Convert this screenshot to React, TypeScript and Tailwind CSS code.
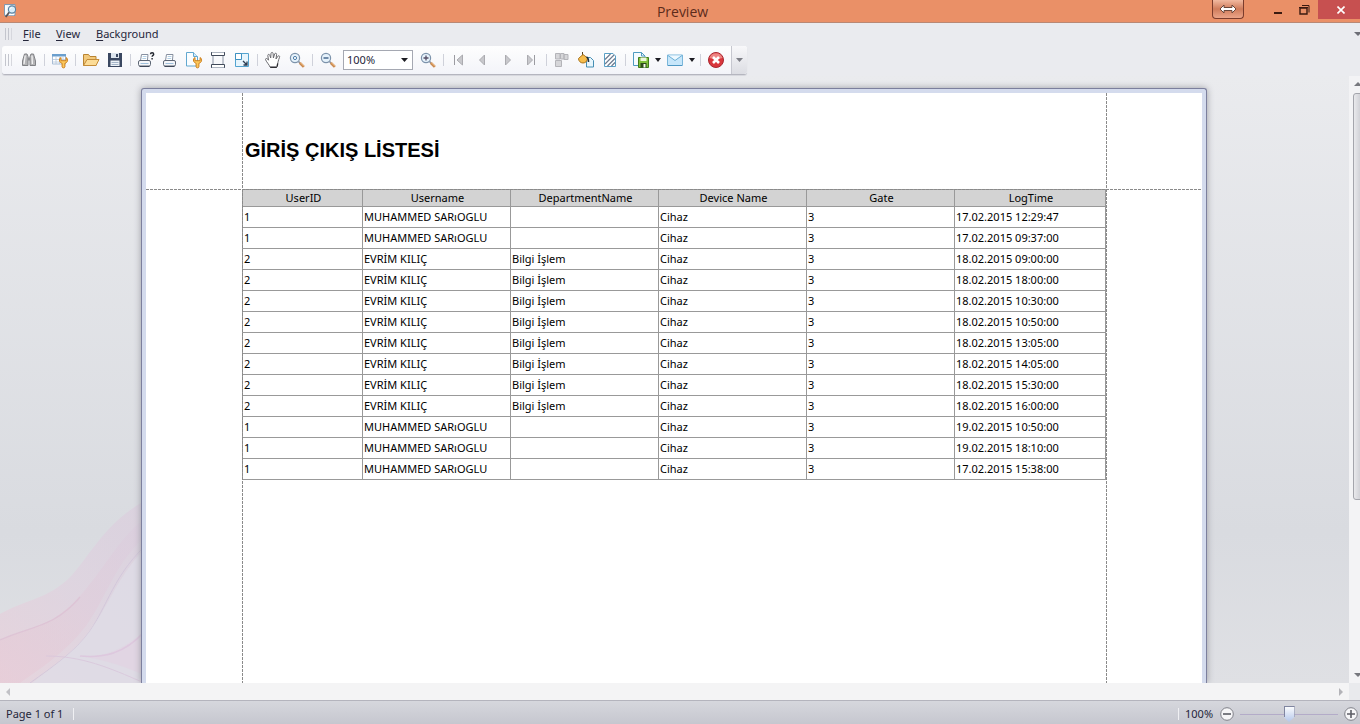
import type { ReactNode } from "react";

const columns = ["UserID", "Username", "DepartmentName", "Device Name", "Gate", "LogTime"];

const muhammed = ["1", "MUHAMMED SARıOGLU", "", "Cihaz", "3"];
const evrim = ["2", "EVRİM KILIÇ", "Bilgi İşlem", "Cihaz", "3"];

const rows: string[][] = [
  [...muhammed, "17.02.2015 12:29:47"],
  [...muhammed, "17.02.2015 09:37:00"],
  [...evrim, "18.02.2015 09:00:00"],
  [...evrim, "18.02.2015 18:00:00"],
  [...evrim, "18.02.2015 10:30:00"],
  [...evrim, "18.02.2015 10:50:00"],
  [...evrim, "18.02.2015 13:05:00"],
  [...evrim, "18.02.2015 14:05:00"],
  [...evrim, "18.02.2015 15:30:00"],
  [...evrim, "18.02.2015 16:00:00"],
  [...muhammed, "19.02.2015 10:50:00"],
  [...muhammed, "19.02.2015 18:10:00"],
  [...muhammed, "17.02.2015 15:38:00"],
];

function Icon({ children }: { children: ReactNode }) {
  return (
    <svg width="18" height="18" viewBox="0 0 18 18" fill="none" aria-hidden="true" className="shrink-0">
      {children}
    </svg>
  );
}

function Tool({ label, children }: { label: string; children: ReactNode }) {
  return (
    <button type="button" aria-label={label} className="flex h-6 w-6 shrink-0 items-center justify-center">
      <Icon>{children}</Icon>
    </button>
  );
}

function Separator() {
  return (
    <div className="flex w-[7px] shrink-0 justify-center">
      <div className="h-3 w-px bg-[#cfd1da]" />
    </div>
  );
}

function MenuArrow({ label }: { label: string }) {
  return (
    <button type="button" aria-label={label} className="flex h-6 w-[10px] shrink-0 items-center justify-center">
      <svg width="6" height="4" viewBox="0 0 6 4" aria-hidden="true">
        <path d="M0 0h6L3 4z" fill="#1c1c22" />
      </svg>
    </button>
  );
}

function Grip() {
  return (
    <div className="flex gap-[2px]">
      <div className="h-3 w-px bg-[#c3c5cd]" />
      <div className="h-3 w-px bg-[#c3c5cd]" />
      <div className="h-3 w-px bg-[#d6d7dd]" />
    </div>
  );
}

function Wrench() {
  return (
    <path
      d="M10 6.500C8.600 7.200 8.200 8.600 8.600 10c.4 1.300 1.400 2 2.500 2.300v3.500c0 1.400 2.800 1.400 2.800 0v-3.500c1.300-.3 2.300-1.200 2.600-2.500.3-1.300-.2-2.600-1.400-3.300v3.200h-5.100z"
      fill="#fcc85c"
      stroke="#cd7f1c"
    />
  );
}

function Lens({ children }: { children: ReactNode }) {
  return (
    <g>
      <path d="M10.500 10.500l2 2" stroke="#7b8496" strokeWidth="1.600" />
      <path d="M11.800 11.800l4 4" stroke="#c9884e" strokeWidth="2.600" />
      <path d="M12 11.300l4 4" stroke="#f2c38e" strokeWidth="1" />
      <circle cx="7" cy="7" r="4.600" fill="#e6f2fb" stroke="#7d93ab" strokeWidth="1.200" />
      {children}
    </g>
  );
}

function Printer() {
  return (
    <g>
      <path d="M4.500 9.500l1-6h6.500l-.6 6" fill="#fff" stroke="#8790a0" />
      <path d="M6.700 5.500h3.800M6.400 7.500h3.800" stroke="#b4d0e6" />
      <rect x="2.500" y="9.500" width="12" height="5.500" rx="1.500" fill="#f5f6f9" stroke="#5d6675" />
      <path d="M4.500 12.500h8" stroke="#9fc0dc" />
      <path d="M3.500 15.500h10" stroke="#3f4858" />
    </g>
  );
}

function MenuBar() {
  const items = [
    { key: "F", rest: "ile", width: "w-[33px]" },
    { key: "V", rest: "iew", width: "w-[40px]" },
    { key: "B", rest: "ackground", width: "w-[70px]" },
  ];
  return (
    <nav className="flex h-[23px] shrink-0 items-center bg-[#eaebef] pb-px pl-[5px]">
      <Grip />
      <div className="flex flex-1 pl-[11px] text-[11px] leading-4">
        {items.map((item) => (
          <button key={item.key} type="button" className={`${item.width} text-left text-[#25263a]`}>
            <span className="underline underline-offset-2">{item.key}</span>
            {item.rest}
          </button>
        ))}
      </div>
      <svg width="6" height="4" viewBox="0 0 6 4" aria-hidden="true">
        <path d="M0 0h8L4 4z" fill="#6d6e76" />
      </svg>
    </nav>
  );
}

function TitleBar() {
  return (
    <header className="flex h-[23px] shrink-0 items-start border-b border-[#b98874] bg-[#ea9067]">
      <div className="w-[153px] pt-[3px] pl-[3px]">
        <Icon>
          <path d="M1.500 1.500h10.500v11H1.500z" fill="#eef4fa" stroke="#8199b0" />
          <path d="M3 3v8M5 11.500h6" stroke="#fff" strokeWidth="1.500" />
          <path d="M6.500 9l-3.800 5" stroke="#5a5557" strokeWidth="1.800" />
          <circle cx="9" cy="6.500" r="3.600" fill="#d9eefb" stroke="#56809f" strokeWidth="1.100" />
          <path d="M7.500 6c0-1 .7-1.600 1.700-1.600" stroke="#fff" />
        </Icon>
      </div>
      <h1 className="flex-1 text-center font-['Open_Sans',sans-serif] text-sm leading-[23px] text-[#5c2b1b]">Preview</h1>
      <div className="flex w-[148px] items-start">
        <button
          type="button"
          aria-label="Resize"
          className="flex h-[19px] w-8 items-center justify-center rounded-b border border-t-0 border-[#7b3c2c] bg-linear-to-b from-[#f1b9a0] via-[#cf7c5b] to-[#eba488]"
        >
          <svg width="18" height="10" viewBox="0 0 18 10" aria-hidden="true">
            <path d="M1 5l4-4v2.500h8V1l4 4-4 4V6.500H5V9z" fill="#fff" stroke="#6a473a" strokeWidth="1" />
          </svg>
        </button>
        <button type="button" aria-label="Minimize" className="ml-[21px] flex h-[21px] w-[26px] items-center justify-center">
          <svg width="8" height="10" viewBox="0 0 8 10" aria-hidden="true">
            <path d="M0 6h8v2H0z" fill="#3a1a10" />
          </svg>
        </button>
        <button type="button" aria-label="Restore" className="flex h-[19px] w-[27px] items-center justify-center">
          <svg width="11" height="11" viewBox="0 0 11 11" fill="none" aria-hidden="true">
            <path d="M1 4h7v6H1z" stroke="#3a1a10" strokeWidth="1.400" />
            <path d="M3 1.500h7v7" stroke="#3a1a10" />
            <path d="M0 3.500h9" stroke="#3a1a10" />
          </svg>
        </button>
        <button type="button" aria-label="Close" className="flex h-[19px] flex-1 items-center justify-center bg-[#c75050] pl-1">
          <svg width="8" height="8" viewBox="0 0 8 8" aria-hidden="true">
            <path d="M.5.5l7 7M7.500.5l-7 7" stroke="#fff" strokeWidth="1.600" />
          </svg>
        </button>
      </div>
    </header>
  );
}

function Toolbar() {
  return (
    <div className="flex h-[30px] shrink-0 bg-[#eaebef] pl-[2px]">
      <div className="flex h-[29px] items-center rounded-[3px] border-b border-[#b5b6bf] bg-linear-to-b from-[#fefefe] to-[#f3f4f9] pl-[3px] shadow-[0_1px_1px_#d5d6dc]">
        <Grip />
        <div className="flex items-center pl-[5px]">
          <Tool label="Find">
            <path d="M4.500 3h2.500l1 2.500V14.500H2.500V10z" fill="#b4b4b6" stroke="#818286" />
            <path d="M13.500 3H11l-1 2.500V14.500h5.500V10z" fill="#b4b4b6" stroke="#818286" />
            <path d="M8 6.500h2v3H8z" fill="#8b8c90" />
            <path d="M5.200 4.500L4 13M12 4.500l.4 8.500" stroke="#f1f1f2" strokeWidth="1.300" />
          </Tool>
          <Separator />
          <Tool label="Customize">
            <path d="M1.500 3.500h13v9.500h-13z" fill="#fff" stroke="#a9bdd5" />
            <path d="M1 3h14v2.500H1z" fill="#6b9fce" />
            <path d="M2 8.500h12M2 11h12M5 5.500V13M8.500 5.500V13M12 5.500V13" stroke="#b5c6db" strokeWidth=".8" />
            <Wrench />
          </Tool>
          <Separator />
          <Tool label="Open">
            <path d="M1.500 14.500v-11h5l1.500 2h6v9z" fill="#f2c97c" stroke="#b98432" />
            <path d="M1.500 14.500L5 8.500h12l-3 6z" fill="#fcdc97" stroke="#c48c38" />
          </Tool>
          <Tool label="Save">
            <path d="M2 2h14v14H2z" fill="#3a4761" />
            <path d="M5 2h8v5H5z" fill="#dde5ee" />
            <path d="M10 3h2v3h-2z" fill="#3a4761" />
            <path d="M4.500 9.500h9V15h-9z" fill="#edf2f7" />
            <path d="M5.500 11.500h7M5.500 13.500h7" stroke="#a4b4c8" />
          </Tool>
          <Separator />
          <Tool label="Print">
            <g transform="translate(-1 0)">
              <Printer />
            </g>
            <path d="M13.500 3.200c0-2 3.200-2 3.200 0 0 1.200-1.600 1.200-1.600 2.600M15.100 7v1.400" stroke="#22262f" strokeWidth="1.400" />
          </Tool>
          <Tool label="Quick print">
            <Printer />
          </Tool>
          <Tool label="Page setup">
            <path d="M1.500 1.500h7l4 4v9.500h-11z" fill="#fafdff" stroke="#62a8d0" />
            <path d="M8.500 1.500v4h4" fill="#d3eafa" stroke="#62a8d0" />
            <Wrench />
          </Tool>
          <Tool label="Header and footer">
            <path d="M4 5v8M14 5v8" stroke="#8a93a3" />
            <path d="M2.500 1v3.500h13V1M2.500 17v-3.500h13V17" fill="#fff" stroke="#414a5a" />
            <path d="M2.500 1.500h13M2.500 16.500h13" stroke="#8a93a3" strokeWidth=".7" />
          </Tool>
          <Tool label="Scale">
            <path d="M2.500 2.500h13v13h-13z" fill="#e7f5fd" stroke="#54a4d0" />
            <path d="M2.500 2.500h6v6h-6z" fill="#fff" stroke="#3f91c1" />
            <path d="M10 10l3.500 3.500M10.500 14h3.500v-3.500" stroke="#2c3b50" strokeWidth="1.300" />
          </Tool>
          <Separator />
          <Tool label="Hand tool">
            <path
              d="M6 16c-.5-2-4-5.500-4.500-7.500C1.500 7 3.500 7.200 4.500 9.200L3.800 4.500c0-1.500 1.700-1.500 2.100 0l.8 2.500L7 2.500c.2-1.500 2-1.300 2.100 0L9.400 7l1.200-4c.5-1.300 2.200-.9 2 .5L12 8l1.900-2.800c.8-1 2.200-.2 1.600 1.100-1.200 3-1.500 5.200-2 6.700L13 16z"
              fill="#fff"
              stroke="#6b6b70"
            />
            <path d="M6.200 16.300h6.600M13.700 12.500l-.5 3" stroke="#2f2f33" strokeWidth="1.300" />
          </Tool>
          <Tool label="Magnifier">
            <Lens>
              <circle cx="7" cy="7" r="1.600" fill="#fff" stroke="#4e7eaa" />
            </Lens>
          </Tool>
          <Separator />
          <Tool label="Zoom out">
            <Lens>
              <path d="M4.500 7h5" stroke="#3c5f86" strokeWidth="1.400" />
            </Lens>
          </Tool>
          <div className="relative mr-[3px] ml-[3px] flex h-5 w-[70px] items-center">
            <select
              aria-label="Zoom"
              className="h-full w-full appearance-none border border-[#a5a8b2] bg-white pl-[3px] text-[11px] leading-4 text-[#25263a]"
            >
              <option>100%</option>
            </select>
            <svg width="7" height="4" viewBox="0 0 7 4" aria-hidden="true" className="pointer-events-none absolute right-[5px]">
              <path d="M0 0h7L3.500 4z" fill="#1c1c22" />
            </svg>
          </div>
          <Tool label="Zoom in">
            <Lens>
              <path d="M4.500 7h5M7 4.500v5" stroke="#554d66" strokeWidth="1.300" />
            </Lens>
          </Tool>
          <Separator />
          <Tool label="First page">
            <path d="M4.500 4v10" stroke="#9b9ba1" />
            <path d="M12.500 4v10L7 9z" fill="#c8c8cc" stroke="#ababb0" />
          </Tool>
          <Tool label="Previous page">
            <path d="M10.500 4v10L5.500 9z" fill="#c8c8cc" stroke="#ababb0" />
          </Tool>
          <Tool label="Next page">
            <path d="M7.500 4v10l5-5z" fill="#c8c8cc" stroke="#ababb0" />
          </Tool>
          <Tool label="Last page">
            <path d="M5.500 4v10l5-5z" fill="#c8c8cc" stroke="#ababb0" />
            <path d="M12.500 4v10" stroke="#9b9ba1" />
          </Tool>
          <Separator />
          <Tool label="Multiple pages">
            <path d="M2.500 2.500h4.500v5.500H2.500zM2.500 9.500h6v6h-6zM7.500 2.500h3.500v5.500H7.500zM11 3.500h4v5h-4z" fill="#d6d6d9" stroke="#b4b4b9" />
          </Tool>
          <Tool label="Background color">
            <path d="M9.500 6.500h4l3 3v6.500H9.500z" fill="#e7f5fc" stroke="#458eb4" />
            <path d="M5.500 1v5" stroke="#59411e" />
            <path d="M1.500 7.500L6 3.500l4.500 3.500c0 3-2 5-4.500 5s-4.500-2-4.500-4.500z" fill="#f7bd4c" stroke="#a8741f" />
            <path d="M9.500 6c1.500.5 2 2 2 5" stroke="#24303c" strokeWidth="1.600" />
          </Tool>
          <Tool label="Watermark">
            <path d="M3.500 2.500h8.500l2.500 2.500v10.500h-11z" fill="#fff" stroke="#5aa0c6" />
            <path d="M4 8.500L9.500 3M4 13l9-9M6.500 15L14 7.500M10.500 15l3.500-3.500" stroke="#6d7a90" strokeWidth="1.200" />
          </Tool>
          <Separator />
          <Tool label="Export document">
            <path d="M1.500 1.500h8l3.500 3.500v9.500H1.500z" fill="#f5fbff" stroke="#4f9bc1" />
            <path d="M9.500 1.500V5H13" stroke="#4f9bc1" />
            <path d="M6.500 6.500h10v10h-10z" fill="#7fc03a" stroke="#3f7a1c" />
            <path d="M8.500 6.500h6V10h-6z" fill="#eef7dc" />
            <path d="M8.500 12h6v4.500h-6z" fill="#2d4a1b" />
            <path d="M11.500 13h2v3.500h-2z" fill="#f7faee" />
          </Tool>
          <MenuArrow label="Export options" />
          <Tool label="Send by e-mail">
            <path d="M1.500 4h15v10.500h-15z" fill="#c7e6fa" stroke="#7ab6da" />
            <path d="M2 4.500L9 9.500l7-5" fill="#edf8ff" stroke="#6aaed5" />
            <path d="M2 14.500h14" stroke="#4f98c4" />
          </Tool>
          <MenuArrow label="E-mail options" />
          <Separator />
          <Tool label="Close preview">
            <circle cx="9" cy="9" r="7.500" fill="#d9363c" stroke="#a92831" />
            <path d="M2.500 7a6.800 6.800 0 0 1 13 0c-4 1.500-9 1.500-13 0z" fill="#ee8583" />
            <path d="M6 6l6 6M12 6l-6 6" stroke="#fff" strokeWidth="2.600" />
          </Tool>
        </div>
        <button
          type="button"
          aria-label="Toolbar options"
          className="ml-[3px] flex h-[28px] w-4 items-center justify-center rounded-r-[3px] border-l border-[#c6c7cf] bg-linear-to-b from-[#f8f8fa] to-[#dcdde3]"
        >
          <svg width="7" height="4" viewBox="0 0 7 4" aria-hidden="true">
            <path d="M0 0h7L3.500 4z" fill="#7d7e86" />
          </svg>
        </button>
      </div>
    </div>
  );
}

function Waves() {
  return (
    <svg
      width="160"
      height="190"
      viewBox="0 0 160 190"
      fill="none"
      aria-hidden="true"
      className="pointer-events-none absolute bottom-0 left-0"
    >
      <defs>
        <linearGradient id="veil" x1="0" y1="1" x2="1" y2="0">
          <stop offset="0" stopColor="#e9cfda" />
          <stop offset=".5" stopColor="#dfd1df" />
          <stop offset="1" stopColor="#dacddd" />
        </linearGradient>
        <linearGradient id="fold" x1="0" y1="1" x2="1" y2="0">
          <stop offset="0" stopColor="#e8c8d4" />
          <stop offset="1" stopColor="#d9cddf" />
        </linearGradient>
      </defs>
      <path d="M0 121C22 108 44 107 66 88S104 24 160 0v190H0z" fill="url(#veil)" opacity=".7" />
      <path d="M0 147c32-14 54-14 80-44 30-34 42-66 80-88v16c-44 32-50 68-74 102-22 28-48 44-66 57H0z" fill="url(#fold)" opacity=".5" />
      <path d="M0 147c30-14 54-12 80-43" stroke="#dcc0d3" strokeWidth="1.200" opacity=".8" />
      <path d="M30 190c22-16 44-30 60-52 20-30 26-64 70-98" stroke="#d2c7da" opacity=".9" />
      <path d="M160 42c-40 32-48 66-70 96-16 22-38 36-58 52h128z" fill="#dfdce6" opacity=".8" />
      <path d="M78 163c26 2 48-4 82-40v67c-30-16-56-24-82-27z" fill="#e3cfe2" opacity=".5" />
      <path d="M80 163c24 2 44-2 64-24" stroke="#dcc2dc" strokeWidth="1.500" opacity=".7" />
      <path d="M46 163c36 0 64 12 96 26" stroke="#d8c5db" opacity=".8" />
    </svg>
  );
}

function Paper() {
  return (
    <div className="relative mx-auto mt-3 w-full max-w-[1066px] self-stretch rounded-t-[3px] border-x border-t border-[#7c7f9d] bg-[#d4dbed] px-1 pt-1 shadow-[0_0_7px_#9b9ca3]">
      <div className="relative h-full bg-white px-24">
        <div className="flex h-24 items-center pt-[18px] pl-[3px]">
          <h2 className="font-['Liberation_Sans',Arial,sans-serif] text-xl leading-6 font-bold text-black">GİRİŞ ÇIKIŞ LİSTESİ</h2>
        </div>
        <table className="w-full table-fixed border-collapse text-[11px] leading-4 text-black">
          <colgroup>
            <col className="w-[120px]" />
            <col className="w-[148px]" />
            <col className="w-[148px]" />
            <col className="w-[148px]" />
            <col className="w-[148px]" />
            <col />
          </colgroup>
          <thead>
            <tr className="h-[17px] bg-[#d3d3d3]">
              {columns.map((name) => (
                <th key={name} className="border border-[#999999] py-0 pr-0 pl-[2px] font-normal">
                  {name}
                </th>
              ))}
            </tr>
          </thead>
          <tbody>
            {rows.map((row, i) => (
              <tr key={i} className="h-[21px]">
                {row.map((cell, j) => (
                  <td key={j} className="border border-[#999999] py-0 pr-0 pl-px whitespace-nowrap">
                    {cell}
                  </td>
                ))}
              </tr>
            ))}
          </tbody>
        </table>
        {/* margin guides */}
        <div className="absolute inset-y-0 left-24 w-px bg-[repeating-linear-gradient(to_bottom,#8a8a8a_0_3px,transparent_3px_4px)]" />
        <div className="absolute inset-y-0 right-[95px] w-px bg-[repeating-linear-gradient(to_bottom,#8a8a8a_0_3px,transparent_3px_4px)]" />
        <div className="absolute inset-x-0 top-24 h-px bg-[repeating-linear-gradient(to_right,#8a8a8a_0_3px,transparent_3px_4px)]" />
      </div>
    </div>
  );
}

function VerticalScrollbar() {
  return (
    <div className="flex w-[11px] shrink-0 overflow-hidden bg-[#f3f3f5]">
      <div className="flex w-[17px] shrink-0 flex-col items-center">
        <svg width="8" height="17" viewBox="0 0 8 17" aria-hidden="true">
          <path d="M0 10h8L4 6z" fill="#77787e" />
        </svg>
        <div className="h-[407px] w-[10px] rounded-[3px] border border-[#a4a5ac] bg-linear-to-r from-[#e9e9ec] to-[#c9cad0]" />
        <div className="flex-1" />
        <svg width="8" height="17" viewBox="0 0 8 17" aria-hidden="true">
          <path d="M0 7h8l-4 4z" fill="#77787e" />
        </svg>
      </div>
    </div>
  );
}

function HorizontalScrollbar() {
  return (
    <div className="flex h-[17px] shrink-0 bg-[#e9eaed]">
      <div className="flex flex-1 items-center justify-between bg-[#f4f4f5] px-[6px]">
        <svg width="4" height="8" viewBox="0 0 4 8" aria-hidden="true">
          <path d="M4 0v8L0 4z" fill="#c1c1c6" />
        </svg>
        <svg width="4" height="8" viewBox="0 0 4 8" aria-hidden="true">
          <path d="M0 0v8l4-4z" fill="#b3b3b8" />
        </svg>
      </div>
      <div className="w-[11px]" />
    </div>
  );
}

function RoundButton({ label, plus }: { label: string; plus?: boolean }) {
  return (
    <button type="button" aria-label={label} className="shrink-0">
      <svg width="14" height="14" viewBox="0 0 14 14" aria-hidden="true" className="block">
        <circle cx="7" cy="7" r="6.300" fill="#f6f6f8" stroke="#7f8088" />
        <path d={plus ? "M3 7h8M7 3v8" : "M3 7h8"} stroke="#5d5e66" strokeWidth="1.600" />
      </svg>
    </button>
  );
}

function StatusBar() {
  return (
    <footer className="flex h-6 shrink-0 items-center border-t border-[#b4b4bd] bg-linear-to-b from-[#d6d7dd] to-[#c6c7cf] pt-[3px] pr-[2px] pl-[6px] text-[11px] leading-4 text-[#25263a]">
      <span className="w-[67px]">Page 1 of 1</span>
      <div className="h-3 w-px bg-[#f0f0f3]" />
      <div className="flex-1" />
      <div className="h-3 w-px bg-[#f0f0f3]" />
      <span className="ml-[6px] w-[35px]">100%</span>
      <RoundButton label="Zoom out" />
      <input
        type="range"
        aria-label="Zoom level"
        min={0}
        max={100}
        defaultValue={50}
        className="mx-[6px] h-4 w-[98px] appearance-none bg-[linear-gradient(#b3abc8,#b3abc8)] bg-size-[100%_1px] bg-center bg-no-repeat [&::-webkit-slider-thumb]:h-4 [&::-webkit-slider-thumb]:w-[11px] [&::-webkit-slider-thumb]:appearance-none [&::-webkit-slider-thumb]:bg-[linear-gradient(#8085a0,#8085a0),linear-gradient(#8085a0,#8085a0),linear-gradient(#8085a0,#8085a0),linear-gradient(#ffffff,#b3c6ea)] [&::-webkit-slider-thumb]:bg-size-[100%_1px,1px_11px,1px_11px,100%_100%] [&::-webkit-slider-thumb]:bg-position-[0_0,0_0,100%_0,0_0] [&::-webkit-slider-thumb]:bg-no-repeat [&::-webkit-slider-thumb]:[clip-path:polygon(0_0,100%_0,100%_68%,50%_100%,0_68%)]"
      />
      <RoundButton label="Zoom in" plus />
    </footer>
  );
}

export default function App() {
  return (
    <div className="flex h-screen flex-col overflow-hidden bg-[#eaebef] font-['Noto_Sans',sans-serif]">
      <TitleBar />
      <MenuBar />
      <Toolbar />
      <main className="flex min-h-0 flex-1">
        <div className="relative flex min-w-0 flex-1 overflow-hidden bg-linear-to-b from-[#eaebee] via-[#d9dbe0] via-75% to-[#dfe0e4] pr-px">
          <Waves />
          <Paper />
        </div>
        <VerticalScrollbar />
      </main>
      <HorizontalScrollbar />
      <StatusBar />
    </div>
  );
}
